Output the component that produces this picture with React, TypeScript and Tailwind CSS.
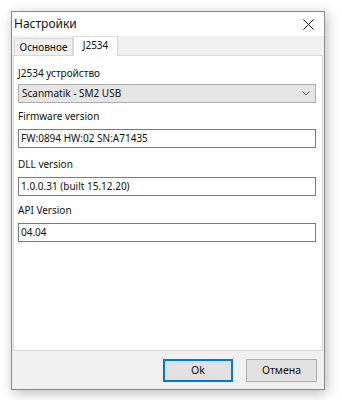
import React from "react";

const font = { fontFamily: '"Noto Sans", "Open Sans", sans-serif' };

function Label({ text, mt }: { text: string; mt: string }) {
  return (
    <div className={`${mt} h-[14px] text-[10px] leading-[14px] text-[#111]`}>{text}</div>
  );
}

function TextBox({ value }: { value: string }) {
  return (
    <div className="mt-[6px] h-[19px] w-[298px] border border-[#7a7a7a] bg-white pl-[2px] text-[10px] leading-[17px] text-[#111]">
      {value}
    </div>
  );
}

export default function App() {
  return (
    <div className="h-[400px] w-[342px] bg-white pl-[11px] pt-[11px]" style={font}>
      <div className="flex h-[379px] w-[314px] flex-col border border-[#8a8a8a] bg-[#f0f0f0] shadow-[2px_3px_12px_rgba(0,0,0,0.28)]">
        {/* Title bar */}
        <div className="flex h-[24px] items-center justify-between bg-white pl-[2px] pr-[10px]">
          <span className="text-[12px] text-[#111]">Настройки</span>
          <svg width="11" height="11" viewBox="0 0 11 11">
            <path d="M0.5 0.5 L10.5 10.5 M10.5 0.5 L0.5 10.5" stroke="#111" strokeWidth="1" fill="none" />
          </svg>
        </div>
        {/* Tabs */}
        <div className="flex flex-col px-[1px]">
          <div className="flex h-[19px] items-end pl-[1px]">
            <div className="flex h-[17px] w-[59px] items-center justify-center border border-b-0 border-[#d9d9d9] bg-[#f0f0f0] text-[10px] text-[#111]">
              Основное
            </div>
            <div className="relative z-10 -mb-[1px] flex h-[20px] w-[45px] items-start justify-center border border-b-0 border-[#d9d9d9] bg-white pt-[1px] text-[10px] text-[#111]">
              J2534
            </div>
          </div>
          <div className="flex h-[296px] flex-col border border-[#d9d9d9] bg-white pl-[4px]">
            <Label text="J2534 устройство" mt="mt-[10px]" />
            <div className="mt-[4px] flex h-[19px] w-[298px] items-center justify-between border border-[#adadad] bg-[#e5e5e5] pl-[3px] pr-[5px] text-[10px] text-[#111]">
              <span>Scanmatik - SM2 USB</span>
              <svg width="8" height="5" viewBox="0 0 8 5">
                <path d="M0.5 0.5 L4 4 L7.5 0.5" stroke="#666" strokeWidth="1" fill="none" />
              </svg>
            </div>
            <Label text="Firmware version" mt="mt-[6px]" />
            <TextBox value="FW:0894 HW:02 SN:A71435" />
            <Label text="DLL version" mt="mt-[9px]" />
            <TextBox value="1.0.0.31 (built 15.12.20)" />
            <Label text="API Version" mt="mt-[7px]" />
            <TextBox value="04.04" />
          </div>
        </div>
        {/* Buttons */}
        <div className="mt-[8px] flex justify-end gap-[13px] pr-[7px]">
          <button className="h-[23px] w-[70px] border-2 border-[#0078d7] bg-[#e1e1e1] text-[10.5px] text-[#111]">
            Ok
          </button>
          <button className="h-[23px] w-[71px] border border-[#adadad] bg-[#e1e1e1] text-[10.5px] text-[#111]">
            Отмена
          </button>
        </div>
      </div>
    </div>
  );
}
